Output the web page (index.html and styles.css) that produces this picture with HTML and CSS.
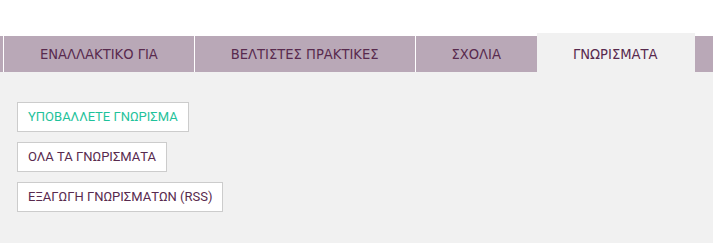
FILE: index.html
```html
<!DOCTYPE html>
<html lang="el">
<head>
<meta charset="utf-8">
<title>Γνωρίσματα</title>
<link rel="stylesheet" href="styles.css">
</head>
<body>
<div class="top">
  <div class="top-line"><span class="accent">ρ</span><span class="muted">γ</span></div>
</div>
<nav class="tabs">
  <span class="tab tab-edge"></span>
  <a class="tab" href="#">ΕΝΑΛΛΑΚΤΙΚΟ ΓΙΑ</a>
  <a class="tab" href="#">ΒΕΛΤΙΣΤΕΣ ΠΡΑΚΤΙΚΕΣ</a>
  <a class="tab" href="#">ΣΧΟΛΙΑ</a>
  <a class="tab tab-active" href="#">ΓΝΩΡΙΣΜΑΤΑ</a>
  <span class="tab tab-fill"></span>
</nav>
<main class="panel">
  <a class="btn btn-green" href="#">ΥΠΟΒΑΛΛΕΤΕ ΓΝΩΡΙΣΜΑ</a>
  <a class="btn" href="#">ΟΛΑ ΤΑ ΓΝΩΡΙΣΜΑΤΑ</a>
  <a class="btn" href="#">ΕΞΑΓΩΓΗ ΓΝΩΡΙΣΜΑΤΩΝ (RSS)</a>
</main>
</body>
</html>
```
FILE: styles.css
```css
html, body {
  margin: 0;
  padding: 0;
  background: #f1f1f1;
  overflow: hidden;
}
body {
  font-family: Roboto, "Liberation Sans", sans-serif;
}
.top {
  height: 33px;
  background: #ffffff;
  overflow: hidden;
}
.top-line {
  display: flex;
  margin-top: -19px;
  padding-left: 356px;
  font-size: 16px;
  line-height: 20px;
  gap: 70px;
}
.accent { color: #1fc29b; }
.muted { color: #777777; }

.tabs {
  display: flex;
  align-items: flex-end;
  height: 39px;
  background: #ffffff;
}
.tab {
  display: block;
  height: 36px;
  line-height: 36px;
  padding: 0 36px;
  background: #b9a8b7;
  color: #582a4e;
  font-family: "Liberation Sans Narrow", "DejaVu Sans Condensed", sans-serif;
  font-size: 14.6px;
  text-decoration: none;
  border-left: 1px solid #ffffff;
  white-space: nowrap;
}
.tab-edge {
  width: 3px;
  padding: 0;
  border-left: 0;
}
.tab-active {
  height: 39px;
  padding: 3px 37px 0 36px;
  box-sizing: border-box;
  background: #f1f1f1;
  border-left: 0;
}
.tab-fill {
  flex: 1;
  padding: 0;
  border-left: 0;
}

.panel {
  display: flex;
  flex-direction: column;
  align-items: flex-start;
  gap: 10px;
  padding: 30px 17px;
}
.btn {
  display: block;
  height: 30px;
  box-sizing: border-box;
  line-height: 28px;
  padding: 0 10px;
  border: 1px solid #cccccc;
  background: #ffffff;
  color: #582a4e;
  font-size: 13px;
  text-decoration: none;
  white-space: nowrap;
}
.btn-green {
  color: #1fc29b;
}
```
